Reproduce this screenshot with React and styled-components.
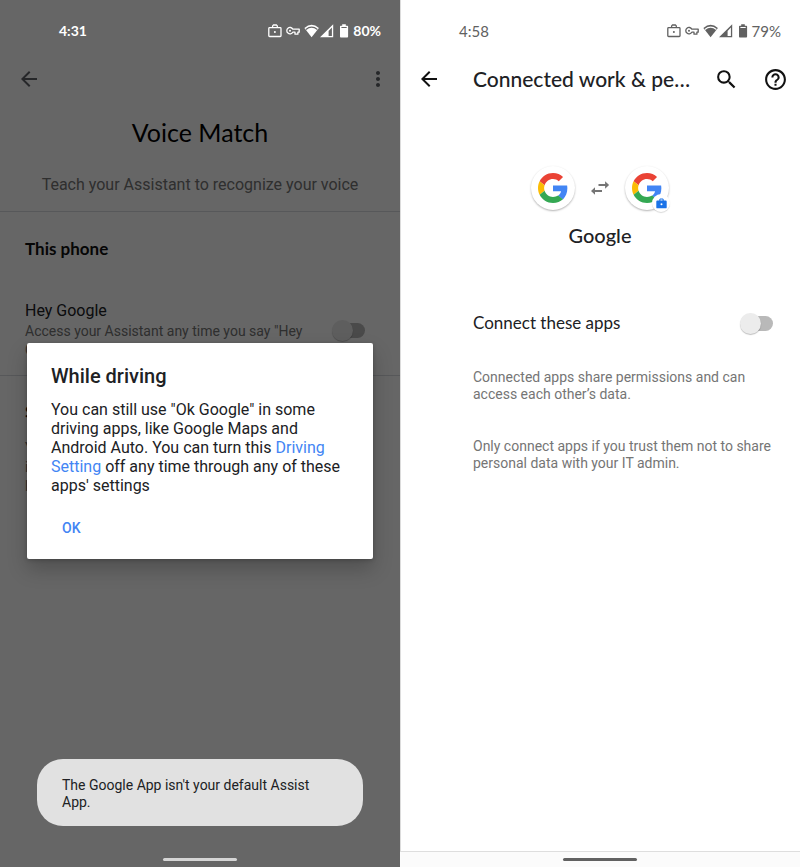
import React from 'react';
import styled, { createGlobalStyle } from 'styled-components';
import { MdArrowBack, MdMoreVert, MdSearch, MdHelpOutline } from 'react-icons/md';

const brandFont = '"Lato", "Roboto", sans-serif';

const GlobalStyle = createGlobalStyle`
  *, *::before, *::after { box-sizing: border-box; }
  body { margin: 0; font-family: "Roboto", sans-serif; color: #202124; background: #fff; }
  h1, h2, h3, p { margin: 0; }
  button, input { font: inherit; }
`;

const Screens = styled.main`
  display: grid;
  grid-template-columns: 1fr 1fr;
  min-height: 100vh;
`;

const Phone = styled.section`
  position: relative;
  display: flex;
  flex-direction: column;
  min-width: 0;
  background: #fff;
  box-shadow: ${(p) => (p.$divided ? 'inset 1px 0 #dcdcdc' : 'none')};
`;

const StatusBar = styled.div`
  position: relative;
  z-index: 2;
  display: flex;
  align-items: center;
  justify-content: space-between;
  padding: 20px 19px 0 59px;
  height: 42px;
  font-family: ${brandFont};
  font-size: ${(p) => (p.$onDark ? 14 : 15)}px;
  line-height: 22px;
  font-weight: ${(p) => (p.$onDark ? 700 : 400)};
  color: ${(p) => (p.$onDark ? '#fff' : '#616161')};
`;

const StatusIcons = styled.div`
  display: flex;
  align-items: center;
  gap: 4px;
`;

const GlyphRow = styled.div`
  --gap: ${(p) => (p.$onDark ? '#666' : '#fff')};
  display: flex;
  align-items: center;
  gap: 4px;
`;

const AppBar = styled.header`
  display: flex;
  align-items: center;
  height: 74px;
  padding: 0 ${(p) => (p.$wide ? 12 : 10)}px 0 16px;
`;

const IconButton = styled.button`
  display: flex;
  align-items: center;
  justify-content: center;
  width: 25px;
  height: 25px;
  padding: 0;
  border: 0;
  background: none;
  color: ${(p) => (p.$muted ? '#5f6368' : '#111')};
  cursor: pointer;
`;

const Spacer = styled.div`
  flex: 1;
`;

const BarTitle = styled.h1`
  flex: 1;
  min-width: 0;
  margin: 0 22px 0 32px;
  overflow: hidden;
  white-space: nowrap;
  text-overflow: ellipsis;
  font-family: ${brandFont};
  font-size: 21px;
  line-height: 28px;
  font-weight: 500;
`;

const BarActions = styled.div`
  display: flex;
  gap: 24px;
`;

const Intro = styled.div`
  padding: 0 24px 15px;
  text-align: center;
  border-bottom: 1px solid #dadce0;
`;

const PageTitle = styled.h1`
  font-family: ${brandFont};
  font-size: 25px;
  line-height: 32px;
  font-weight: 400;
  color: #000;
`;

const Subtitle = styled.p`
  margin-top: 26px;
  font-size: 16px;
  line-height: 22px;
  color: #757575;
`;

const Group = styled.div`
  padding: 24px 25px 0;
  border-bottom: 1px solid #dadce0;
`;

const GroupTitle = styled.h2`
  font-family: ${brandFont};
  font-size: 17px;
  line-height: 26px;
  font-weight: 700;
  color: #111;
`;

const Setting = styled.div`
  display: flex;
  align-items: center;
  justify-content: space-between;
  gap: 20px;
  padding: 38px 10px 15px 0;
`;

const SettingName = styled.label`
  display: block;
  font-size: 16px;
  line-height: 22px;
  color: #202124;
`;

const SettingText = styled.p`
  font-size: 14px;
  line-height: 19px;
  color: #757575;
`;

const Shared = styled.div`
  padding: 23px 25px 0;
`;

const SharedText = styled(SettingText)`
  margin-top: 14px;
`;

const Switch = styled.input`
  appearance: none;
  flex: none;
  display: grid;
  align-items: center;
  width: 33px;
  height: 22px;
  margin: 0;
  cursor: pointer;
  &::before, &::after {
    content: '';
    grid-area: 1 / 1;
  }
  &::before {
    justify-self: end;
    width: 28px;
    height: 15px;
    border-radius: 8px;
    background: #b9b9b9;
  }
  &::after {
    width: 21px;
    height: 21px;
    border-radius: 50%;
    background: #ececec;
    box-shadow: 0 1px 1px rgba(0, 0, 0, 0.25);
  }
  &:checked::after { justify-self: end; background: #1a73e8; }
`;

const Scrim = styled.div`
  position: absolute;
  inset: 0;
  z-index: 1;
  display: flex;
  align-items: center;
  padding: 35px 27px 0;
  background: rgba(0, 0, 0, 0.6);
`;

const Dialog = styled.div`
  width: 100%;
  padding: 20px 24px 14px;
  border-radius: 2px;
  background: #fff;
  box-shadow: 0 10px 20px rgba(0, 0, 0, 0.22), 0 1px 4px rgba(0, 0, 0, 0.2);
`;

const DialogTitle = styled.h2`
  font-size: 20px;
  line-height: 26px;
  font-weight: 500;
`;

const DialogText = styled.p`
  margin-top: 11px;
  font-size: 16px;
  line-height: 19px;
`;

const Link = styled.a`
  color: #4285f4;
  text-decoration: none;
`;

const DialogButton = styled.button`
  display: block;
  margin-top: 15px;
  padding: 0 11px;
  height: 35px;
  border: 0;
  background: none;
  font-size: 14px;
  font-weight: 500;
  color: #4285f4;
  cursor: pointer;
`;

const Toast = styled.div`
  position: absolute;
  z-index: 2;
  left: 37px;
  right: 37px;
  bottom: 41px;
  padding: 18px 25px 15px;
  border-radius: 26px;
  background: #e1e1e1;
  font-size: 14px;
  line-height: 17px;
`;

const NavBar = styled.div`
  position: relative;
  z-index: 2;
  display: flex;
  justify-content: center;
  height: 16px;
  margin-top: auto;
  padding-top: 6px;
  border-top: ${(p) => (p.$light ? '1px solid #dedede' : '1px solid transparent')};
  background: ${(p) => (p.$light ? '#fbfbfb' : 'transparent')};
`;

const HomePill = styled.div`
  width: 74px;
  height: 3px;
  border-radius: 2px;
  background: ${(p) => (p.$light ? '#616161' : '#d5d5d5')};
`;

const AppPair = styled.div`
  display: flex;
  align-items: center;
  justify-content: center;
  gap: 15px;
  padding-top: 50px;
`;

const AppIcon = styled.div`
  position: relative;
  display: flex;
  align-items: center;
  justify-content: center;
  width: 44px;
  height: 44px;
  border-radius: 50%;
  background: #fff;
  box-shadow: 0 1px 2px rgba(0, 0, 0, 0.3);
`;

const WorkBadge = styled.div`
  position: absolute;
  right: -1px;
  bottom: -2px;
  display: flex;
  align-items: center;
  justify-content: center;
  width: 18px;
  height: 18px;
  border-radius: 50%;
  background: #fff;
  box-shadow: 0 1px 1px rgba(0, 0, 0, 0.15);
`;

const AppName = styled.h2`
  margin-top: 12px;
  text-align: center;
  font-family: ${brandFont};
  font-size: 20px;
  line-height: 26px;
  font-weight: 500;
`;

const ConnectRow = styled.div`
  display: flex;
  align-items: center;
  justify-content: space-between;
  margin-top: 62px;
  padding: 0 27px 0 73px;
`;

const ConnectLabel = styled.label`
  font-family: ${brandFont};
  font-size: 17px;
  line-height: 26px;
`;

const Notes = styled.div`
  display: grid;
  gap: 35px;
  padding: 33px 8px 24px 73px;
  font-size: 14px;
  line-height: 17px;
  color: #757575;
`;

function StatusGlyphs() {
  return (
    <>
      <svg width="14" height="14" viewBox="0 0 14 14" fill="none" stroke="currentColor" strokeWidth="1.3">
        <rect x="0.8" y="3.6" width="12.2" height="8.9" rx="0.8" />
        <path d="M4.6 3.5V1.9L5.5 1h2.9l.9.9v1.6" />
        <circle cx="6.9" cy="8" r="1" fill="currentColor" stroke="none" />
      </svg>
      <svg width="14" height="14" viewBox="0 0 14 14" fill="none" stroke="currentColor" strokeWidth="1.3">
        <path d="M6.8 5.1h6.4v3.1h-1.3v2H9v-2H6.8A3.2 3.2 0 1 1 6.8 5.1Z" strokeLinejoin="round" />
        <circle cx="4" cy="6.7" r="1" fill="currentColor" stroke="none" />
      </svg>
      <svg width="31" height="14" viewBox="0 0 31 14" fill="currentColor">
        <path d="M.4 3.9Q7.6-2.6 14.9 3.9L7.6 13.3Z" />
        <path d="M1.9 5.5Q7.6.8 13.4 5.5" fill="none" stroke="var(--gap)" strokeWidth="1.1" />
        <path d="M16 13.2 29.2.2v13ZM24.6 6.9v5h3.3V3.5Z" fillRule="evenodd" />
      </svg>
      <svg width="10" height="14" viewBox="0 0 10 14" fill="currentColor">
        <path d="M3.2.2h3.6v1.5h1.5q.8 0 .8.8v10q0 .9-.8.9H1.8q-.8 0-.8-.9v-10q0-.8.8-.8h1.4Z" />
        <path d="M2.4 3h5.3v1H2.4Z" fill="var(--gap)" />
      </svg>
    </>
  );
}

function Status({ time, battery, onDark }) {
  return (
    <StatusBar $onDark={onDark}>
      <span>{time}</span>
      <StatusIcons>
        <GlyphRow $onDark={onDark}><StatusGlyphs /></GlyphRow>
        <span>{battery}</span>
      </StatusIcons>
    </StatusBar>
  );
}

function GoogleLogo() {
  return (
    <svg width="30" height="30" viewBox="0 0 48 48" aria-hidden="true">
      <path fill="#EA4335" d="M24 9.5c3.54 0 6.71 1.22 9.21 3.6l6.85-6.85C35.9 2.38 30.47 0 24 0 14.62 0 6.51 5.38 2.56 13.22l7.98 6.19C12.43 13.72 17.74 9.5 24 9.5z" />
      <path fill="#4285F4" d="M46.98 24.55c0-1.57-.15-3.09-.38-4.55H24v9.02h12.94c-.58 2.96-2.26 5.48-4.78 7.18l7.73 6c4.51-4.18 7.09-10.36 7.09-17.65z" />
      <path fill="#FBBC05" d="M10.53 28.59c-.48-1.45-.76-2.99-.76-4.59s.27-3.14.76-4.59l-7.98-6.19C.92 16.46 0 20.12 0 24c0 3.88.92 7.54 2.56 10.78l7.97-6.19z" />
      <path fill="#34A853" d="M24 48c6.48 0 11.93-2.13 15.89-5.81l-7.73-6c-2.15 1.45-4.92 2.3-8.16 2.3-6.26 0-11.57-4.22-13.47-9.91l-7.98 6.19C6.51 42.62 14.62 48 24 48z" />
    </svg>
  );
}

function SwapArrows() {
  return (
    <svg width="20" height="16" viewBox="0 0 20 16" fill="#757575" aria-hidden="true">
      <path d="M8.5 4.1h6.6V1.2L19.1 5l-4 3.8V6H8.5Z" />
      <path d="M12 10.1H5V7.2L1 11l4 3.8V12h7Z" />
    </svg>
  );
}

function Briefcase() {
  return (
    <svg width="11" height="11" viewBox="0 0 11 11" aria-hidden="true">
      <path fill="#1a73e8" fillRule="evenodd" d="M3.3 2.5V1.3L4.2.4h2.6l.9.9v1.2h2q1 0 1 .9v6q0 .9-1 .9H1.3q-1 0-1-.9v-6q0-.9 1-.9ZM4.4 2.5h2.2v-1H4.4Z" />
      <circle cx="5.5" cy="6.3" r="1" fill="#fff" />
    </svg>
  );
}

export default function App() {
  return (
    <>
      <GlobalStyle />
      <Screens>
        <Phone>
          <Status time="4:31" battery="80%" onDark />
          <AppBar>
            <IconButton $muted aria-label="Back"><MdArrowBack size={24} /></IconButton>
            <Spacer />
            <IconButton $muted aria-label="More options"><MdMoreVert size={24} /></IconButton>
          </AppBar>
          <Intro>
            <PageTitle>Voice Match</PageTitle>
            <Subtitle>Teach your Assistant to recognize your voice</Subtitle>
          </Intro>
          <Group>
            <GroupTitle>This phone</GroupTitle>
            <Setting>
              <div>
                <SettingName htmlFor="hey-google">Hey Google</SettingName>
                <SettingText>Access your Assistant any time you say "Hey Google"</SettingText>
              </div>
              <Switch type="checkbox" id="hey-google" />
            </Setting>
          </Group>
          <Shared>
            <GroupTitle>Shared devices</GroupTitle>
            <SharedText>
              You can use Voice Match on devices<br />
              in your home that are<br />
              linked to your account
            </SharedText>
          </Shared>
          <Scrim>
            <Dialog role="dialog" aria-labelledby="driving-title">
              <DialogTitle id="driving-title">While driving</DialogTitle>
              <DialogText>
                You can still use "Ok Google" in some driving apps, like Google Maps and Android Auto. You can
                turn this <Link href="#driving">Driving Setting</Link> off any time through any of these apps' settings
              </DialogText>
              <DialogButton>OK</DialogButton>
            </Dialog>
          </Scrim>
          <Toast role="status">The Google App isn't your default Assist App.</Toast>
          <NavBar><HomePill /></NavBar>
        </Phone>

        <Phone $divided>
          <Status time="4:58" battery="79%" />
          <AppBar $wide>
            <IconButton aria-label="Back"><MdArrowBack size={24} /></IconButton>
            <BarTitle>Connected work &amp; personal apps</BarTitle>
            <BarActions>
              <IconButton aria-label="Search"><MdSearch size={25} /></IconButton>
              <IconButton aria-label="Help"><MdHelpOutline size={25} /></IconButton>
            </BarActions>
          </AppBar>
          <AppPair>
            <AppIcon><GoogleLogo /></AppIcon>
            <SwapArrows />
            <AppIcon>
              <GoogleLogo />
              <WorkBadge><Briefcase /></WorkBadge>
            </AppIcon>
          </AppPair>
          <AppName>Google</AppName>
          <ConnectRow>
            <ConnectLabel htmlFor="connect">Connect these apps</ConnectLabel>
            <Switch type="checkbox" id="connect" />
          </ConnectRow>
          <Notes>
            <p>Connected apps share permissions and can access each other’s data.</p>
            <p>Only connect apps if you trust them not to share personal data with your IT admin.</p>
          </Notes>
          <NavBar $light><HomePill $light /></NavBar>
        </Phone>
      </Screens>
    </>
  );
}
